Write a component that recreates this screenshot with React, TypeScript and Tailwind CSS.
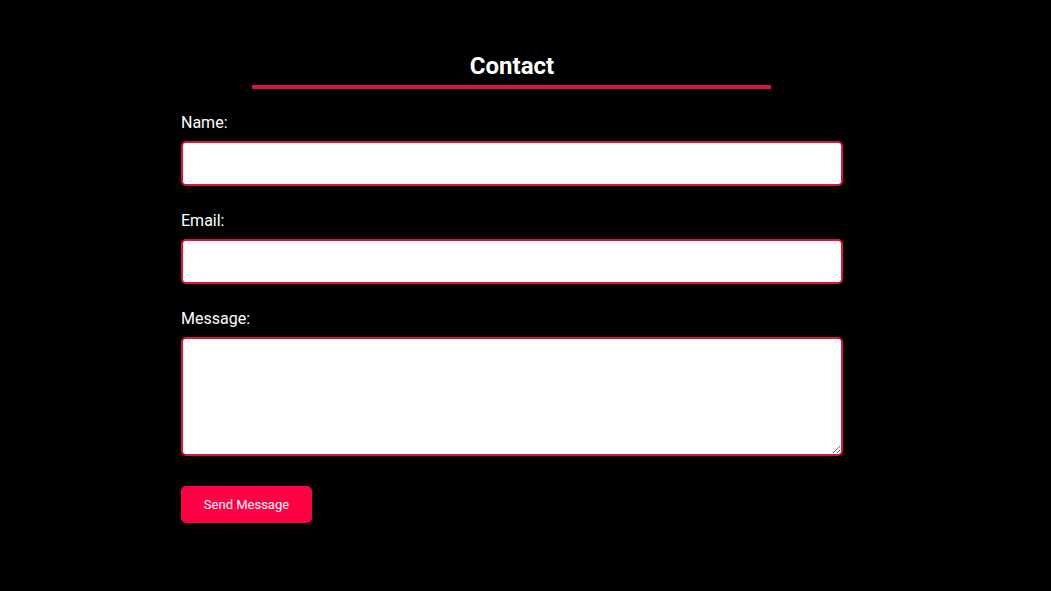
import React from 'react';

const App: React.FC = () => {
  return (
    <div className="min-h-[591px] w-full bg-black pt-[52px] font-['Roboto',sans-serif] text-white">
      <div className="ml-[181px] w-[662px]">
        <h2 className="text-center text-[24px] font-bold leading-[28px]">Contact</h2>
        <div className="ml-[71px] mt-[5px] h-[4px] w-[519px] bg-[#dc143c]" />
      </div>
      <form className="ml-[181px] mt-[23px] flex w-[662px] flex-col" onSubmit={(e) => e.preventDefault()}>
        <label className="mb-[8px] block text-[16px] leading-[21px]">Name:</label>
        <input
          type="text"
          className="h-[45px] w-full rounded-[5px] border-2 border-[#dc143c] bg-white px-[10px] text-black outline-none"
        />
        <label className="mb-[8px] mt-[24px] block text-[16px] leading-[21px]">Email:</label>
        <input
          type="email"
          className="h-[45px] w-full rounded-[5px] border-2 border-[#dc143c] bg-white px-[10px] text-black outline-none"
        />
        <label className="mb-[8px] mt-[24px] block text-[16px] leading-[21px]">Message:</label>
        <textarea className="h-[119px] w-full rounded-[5px] border-2 border-[#dc143c] bg-white p-[10px] text-black outline-none" />
        <button
          type="submit"
          className="mt-[30px] h-[37px] w-[131px] rounded-[5px] bg-[#ff0044] text-[13px] text-white"
        >
          Send Message
        </button>
      </form>
    </div>
  );
};

export default App;
